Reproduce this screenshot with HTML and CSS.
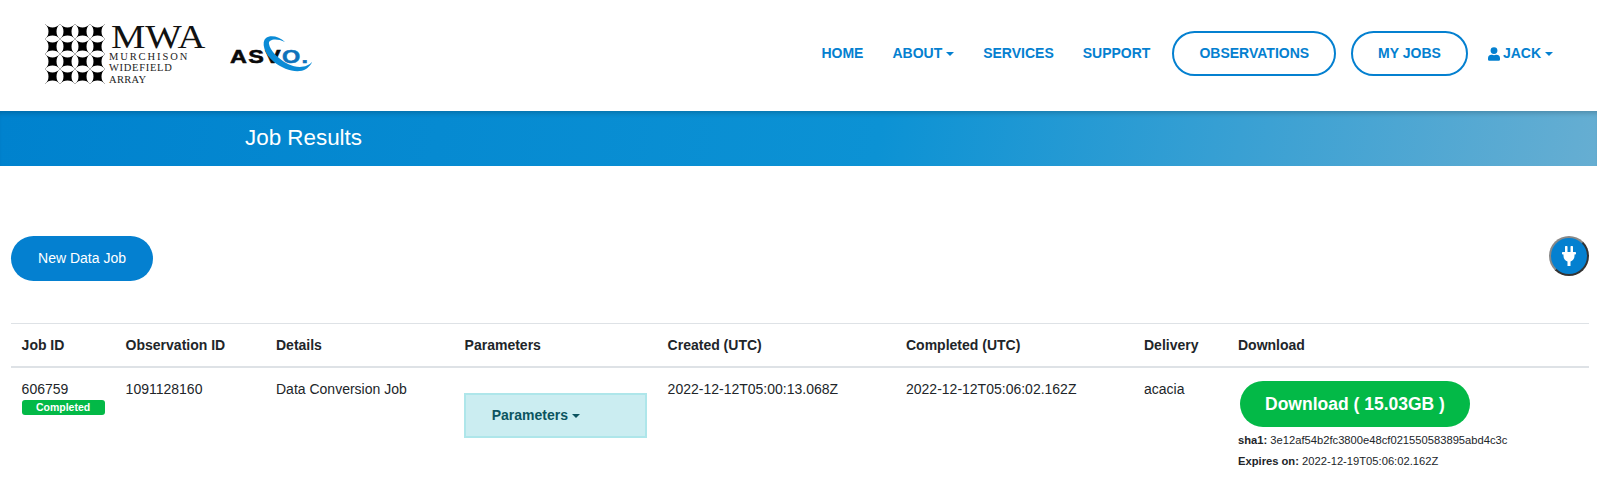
FILE: index.html
```html
<!DOCTYPE html>
<html lang="en">
<head>
<meta charset="utf-8">
<title>Job Results</title>
<link rel="stylesheet" href="styles.css">
</head>
<body>
<header class="navbar">
  <div class="brand">
    <div class="mwa-logo">
      <svg class="mwa-mark" width="60" height="60" viewBox="0 0 60 60">
        <defs>
          <path id="star" d="M-7.500-7.500A9.800 9.800 0 0 0 7.500-7.500A9.800 9.800 0 0 0 7.500 7.500A9.800 9.800 0 0 0-7.500 7.500A9.800 9.800 0 0 0-7.500-7.500Z"/>
          <g id="star-row">
            <use href="#star" x="7.500"/><use href="#star" x="22.500"/><use href="#star" x="37.500"/><use href="#star" x="52.500"/>
          </g>
        </defs>
        <path d="M0 0L60 60M15 0L60 45M30 0L60 30M45 0L60 15M0 15L45 60M0 30L30 60M0 45L15 60M60 0L0 60M45 0L0 45M30 0L0 30M15 0L0 15M60 15L15 60M60 30L30 60M60 45L45 60" fill="none" stroke="#999" stroke-width=".7"/>
        <use href="#star-row" y="7.500"/><use href="#star-row" y="22.500"/><use href="#star-row" y="37.500"/><use href="#star-row" y="52.500"/>
      </svg>
      <div class="mwa-text">
        <div class="mwa-title">MWA</div>
        <div class="mwa-sub mwa-l1">MURCHISON</div>
        <div class="mwa-sub mwa-l2">WIDEFIELD</div>
        <div class="mwa-sub mwa-l3">ARRAY</div>
      </div>
    </div>
    <div class="asvo-logo">
      <span class="asvo-text">ASV<span class="asvo-o">O.</span></span>
      <svg class="asvo-swoosh" width="84" height="46" viewBox="0 0 84 46">
        <path d="M53 12C47 6 38 5 34 8C29 12 32 24 42 32C52 40 66 44 74 39C78 36 80 33 80 32C76 37 66 39 56 34C46 29 38 20 37 14C36 9 45 8 53 12Z" fill="#0a8bd6"/>
      </svg>
    </div>
  </div>
  <nav class="nav">
    <a class="nav-link" href="#">HOME</a>
    <a class="nav-link caret" href="#">ABOUT</a>
    <a class="nav-link" href="#">SERVICES</a>
    <a class="nav-link" href="#">SUPPORT</a>
    <a class="nav-pill" href="#">OBSERVATIONS</a>
    <a class="nav-pill" href="#">MY JOBS</a>
    <a class="nav-link caret user" href="#">
      <svg width="12" height="14" viewBox="0 0 448 512" fill="#0480d0"><path d="M224 256a128 128 0 1 0 0-256 128 128 0 0 0 0 256zm90 32h-17a174 174 0 0 1-146 0h-17A134 134 0 0 0 0 422v42a48 48 0 0 0 48 48h352a48 48 0 0 0 48-48v-42a134 134 0 0 0-134-134z"/></svg>
      JACK
    </a>
  </nav>
</header>

<section class="banner"><h1>Job Results</h1></section>

<main class="content">
  <div class="toolbar">
    <a class="btn-new" href="#">New Data Job</a>
    <span class="status-dot">
      <svg width="14" height="20" viewBox="0 0 14 20" fill="#fff"><path d="M3 1a1.250 1.250 0 0 1 2.500 0V6H3zM8.500 1a1.250 1.250 0 0 1 2.500 0V6H8.500zM.8 6h12.400a.8.8 0 0 1 .8.8v.9a.8.8 0 0 1-.8.8h-.7V10c0 2.800-1.800 4.800-4 5.400V20H5.500v-4.600c-2.200-.6-4-2.600-4-5.400V8.500H.8A.8.8 0 0 1 0 7.700v-.9A.8.8 0 0 1 .8 6z"/></svg>
    </span>
  </div>

  <table class="jobs">
    <thead>
      <tr>
        <th class="c-job">Job ID</th>
        <th class="c-obs">Observation ID</th>
        <th class="c-det">Details</th>
        <th class="c-par">Parameters</th>
        <th class="c-cre">Created (UTC)</th>
        <th class="c-com">Completed (UTC)</th>
        <th class="c-del">Delivery</th>
        <th>Download</th>
      </tr>
    </thead>
    <tbody>
      <tr>
        <td>606759<span class="badge">Completed</span></td>
        <td>1091128160</td>
        <td>Data Conversion Job</td>
        <td><div class="params caret">Parameters</div></td>
        <td>2022-12-12T05:00:13.068Z</td>
        <td>2022-12-12T05:06:02.162Z</td>
        <td>acacia</td>
        <td>
          <a class="btn-download" href="#">Download ( 15.03GB )</a>
          <p class="meta"><b>sha1:</b> 3e12af54b2fc3800e48cf021550583895abd4c3c</p>
          <p class="meta"><b>Expires on:</b> 2022-12-19T05:06:02.162Z</p>
        </td>
      </tr>
    </tbody>
  </table>
</main>
</body>
</html>
```

FILE: styles.css
```css
* { box-sizing: border-box; }
html, body { margin: 0; padding: 0; }
body {
  background: #fff;
  color: #212529;
  font-family: "Liberation Sans", Arial, sans-serif;
  font-size: 14px;
  line-height: 21px;
  height: 492px;
  overflow: hidden;
}
a { text-decoration: none; }

.navbar {
  height: 111px;
  display: flex;
  align-items: center;
  justify-content: space-between;
  padding: 0 44px 4px 45px;
}
.brand { display: flex; align-items: flex-start; gap: 38px; }
.mwa-logo { display: flex; align-items: flex-start; gap: 4px; height: 60px; color: #111; }
.mwa-text { font-family: "Liberation Serif", serif; line-height: 1; padding-top: 1px; }
.mwa-title { font-size: 33px; line-height: 24px; height: 26px; margin-left: 2px; transform: scaleX(1.17); transform-origin: left; }
.mwa-sub { font-size: 10.500px; line-height: 11.500px; color: #222; }
.mwa-l1 { letter-spacing: 1.900px; }
.mwa-l2 { letter-spacing: .7px; }
.mwa-l3 { letter-spacing: .3px; }

.asvo-logo { position: relative; width: 84px; height: 46px; margin-top: 6px; }
.asvo-text {
  position: absolute;
  left: 0;
  top: 15px;
  font-size: 18px;
  line-height: 24px;
  font-weight: 700;
  color: #0a0a0a;
  letter-spacing: 1px;
  transform: scaleX(1.3);
  transform-origin: left;
  white-space: nowrap;
  -webkit-text-stroke: .5px currentColor;
}
.asvo-o { color: #0d72bb; }
.asvo-swoosh { position: absolute; left: 2px; top: 0; }

.nav { display: flex; align-items: center; }
.nav-link {
  color: #0480d0;
  font-weight: 700;
  margin-right: 29px;
  display: inline-flex;
  align-items: center;
}
.nav-pill {
  color: #0480d0;
  font-weight: 700;
  height: 45px;
  border: 2px solid #0480d0;
  border-radius: 23px;
  padding: 0 25px;
  margin-right: 15px;
  display: inline-flex;
  align-items: center;
}
.nav-link + .nav-pill { margin-left: -7px; }
.nav-pill + .nav-link { margin: 0 0 0 5px; }
.nav-link.user svg { margin-right: 3px; }
.caret::after {
  content: "";
  display: inline-block;
  margin-left: 4px;
  border-top: 4px solid currentColor;
  border-left: 4px solid transparent;
  border-right: 4px solid transparent;
}

.banner {
  height: 55px;
  background: linear-gradient(100deg, #0082ce 0%, #0c92d4 55%, #66aed2 100%);
  box-shadow: inset 0 5px 5px -3px rgba(0,0,0,.2);
  padding-left: 245px;
  display: flex;
  align-items: center;
}
.banner h1 { margin: 0; color: #fff; font-weight: 400; font-size: 22.400px; line-height: 1.2; }

.content { padding: 70px 8px 0 11px; }
.toolbar { display: flex; justify-content: space-between; align-items: center; height: 45px; }
.btn-new {
  background: #0480d0;
  color: #fff;
  width: 142px;
  height: 45px;
  border-radius: 23px;
  display: flex;
  align-items: center;
  justify-content: center;
}
.status-dot {
  width: 40px;
  height: 40px;
  border-radius: 50%;
  background: #0480d0;
  border: 2px solid #333;
  border-top-color: #888;
  border-left-color: #888;
  display: flex;
  align-items: center;
  justify-content: center;
  margin-top: -5px;
}

.jobs {
  margin-top: 42px;
  width: 1578px;
  border-collapse: collapse;
  table-layout: fixed;
}
.jobs th, .jobs td { text-align: left; vertical-align: top; padding: 11px 11px 11px 10.600px; }
.jobs th:nth-child(n+6), .jobs td:nth-child(n+6), .jobs th:nth-child(3), .jobs td:nth-child(3) { padding-left: 11px; }
.jobs th { border-top: 1px solid #dee2e6; border-bottom: 2px solid #dee2e6; font-weight: 700; padding-bottom: 10px; }
.c-job { width: 104px; }
.c-obs { width: 150px; }
.c-det { width: 189px; }
.c-par { width: 203px; }
.c-cre { width: 238px; }
.c-com { width: 238px; }
.c-del { width: 94px; }

.badge {
  display: block;
  width: 83px;
  height: 15px;
  background: #03b947;
  color: #fff;
  border-radius: 3px;
  font-size: 10.500px;
  font-weight: 700;
  line-height: 15px;
  text-align: center;
}
.params {
  margin-top: 14px;
  margin-left: -.4px;
  width: 183px;
  height: 45px;
  background: #cbedf1;
  border: 2px solid #aee6ea;
  color: #0c5460;
  font-weight: 700;
  padding-left: 25.500px;
  display: flex;
  align-items: center;
}
.btn-download {
  display: flex;
  align-items: center;
  justify-content: center;
  width: 230px;
  height: 46px;
  margin: 2px 0 0 2px;
  background: #03b947;
  color: #fff;
  font-size: 17.500px;
  font-weight: 700;
  border-radius: 23px;
}
.meta { margin: 0; font-size: 11.200px; line-height: 21px; }
.meta:first-of-type { margin-top: 3px; }
```
